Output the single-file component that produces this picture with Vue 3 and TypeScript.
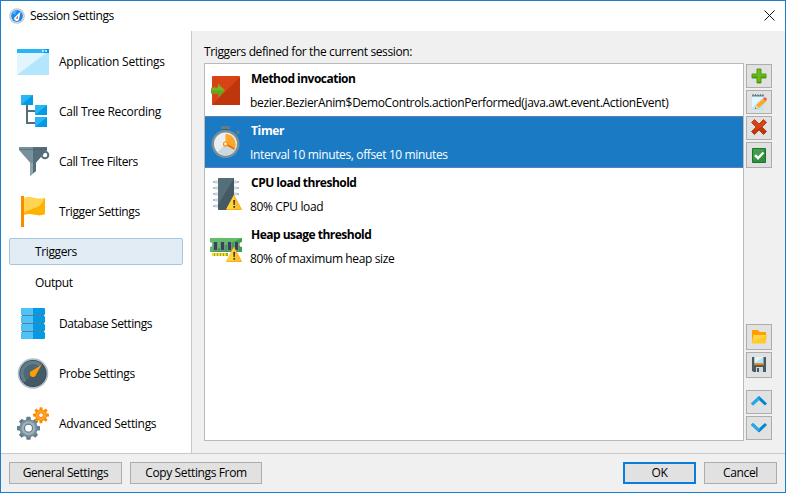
<script setup lang="ts">
import { ref } from 'vue'

interface NavItem { id: string; label: string; sub?: boolean }
interface Trigger { id: string; title: string; detail: string }

const nav: NavItem[] = [
  { id: 'app', label: 'Application Settings' },
  { id: 'tree', label: 'Call Tree Recording' },
  { id: 'filter', label: 'Call Tree Filters' },
  { id: 'flag', label: 'Trigger Settings' },
  { id: 'triggers', label: 'Triggers', sub: true },
  { id: 'output', label: 'Output', sub: true },
  { id: 'db', label: 'Database Settings' },
  { id: 'probe', label: 'Probe Settings' },
  { id: 'gears', label: 'Advanced Settings' },
]

const triggers: Trigger[] = [
  { id: 'method', title: 'Method invocation', detail: 'bezier.BezierAnim$DemoControls.actionPerformed(java.awt.event.ActionEvent)' },
  { id: 'timer', title: 'Timer', detail: 'Interval 10 minutes, offset 10 minutes' },
  { id: 'cpu', title: 'CPU load threshold', detail: '80% CPU load' },
  { id: 'heap', title: 'Heap usage threshold', detail: '80% of maximum heap size' },
]

const tools = ['add', 'edit', 'delete', 'enable', 'open', 'save', 'up', 'down']
const activeNav = ref('triggers')
const selected = ref('timer')

function gear(cx: number, cy: number, outer: number, inner: number): string {
  const pts: string[] = []
  const step = Math.PI / 4
  for (let i = 0; i < 8; i++) {
    const a = i * step
    const spread: [number, number][] = [[-0.28, inner], [-0.17, outer], [0.17, outer], [0.28, inner]]
    for (const [d, r] of spread) {
      pts.push(`${(cx + r * Math.cos(a + d)).toFixed(2)},${(cy + r * Math.sin(a + d)).toFixed(2)}`)
    }
  }
  return pts.join(' ')
}
const bigGear = gear(11.5, 20.2, 11.7, 8.9)
const smallGear = gear(24, 7.2, 8.1, 5.8)
</script>

<template>
  <div class="window">
    <header class="titlebar">
      <svg class="logo" viewBox="0 0 16 16">
        <circle cx="8" cy="8" r="7.8" fill="#bdc4cb" />
        <circle cx="8" cy="8" r="6.7" fill="#e6ebf0" />
        <circle cx="8" cy="8" r="5.9" fill="#1687ee" />
        <path d="M3.2 5.5A5.5 5.5 0 0 1 8 2.5L6 7z" fill="#4bb2ff" />
        <path d="M11.6 3.4L10 11.2A2.4 2.4 0 1 1 5.7 9.2z" fill="#fff" />
        <path d="M8.6 7.2L8.9 10.8H7z" fill="#f0442c" />
      </svg>
      <span class="caption">Session Settings</span>
      <svg class="close" viewBox="0 0 11 11"><path d="M.5.5l10 10M10.5.5l-10 10" stroke="#111" stroke-width="1" /></svg>
    </header>

    <main class="body">
      <nav class="sidebar">
        <div
          v-for="n in nav" :key="n.id"
          :class="['nav', n.sub ? 'sub' : 'top', n.id, { active: n.id === activeNav }]"
          @click="activeNav = n.id"
        >
          <svg v-if="!n.sub" class="icon" viewBox="0 0 32 32">
            <g v-if="n.id === 'app'">
              <path d="M0 7h32v22H0z" fill="#b3e5fc" /><path d="M0 7h29L0 29z" fill="#e1f5fe" />
              <path d="M0 3h32v4H0z" fill="#29b6f6" /><path d="M29 3h3v4h-6z" fill="#039be5" />
              <path d="M25 4h2v2h-2zM28 4h2v2h-2z" fill="#b3e5fc" />
            </g>
            <g v-else-if="n.id === 'tree'">
              <path d="M10 9v18h9M10 15h9" fill="none" stroke="#546e7a" stroke-width="2" />
              <path d="M4 -1h12v10H4zM18 9h12v10H18zM18 21h12v10H18z" fill="#29b6f6" />
              <path d="M16 -1v10H4zM30 9v10H18zM30 21v10H18z" fill="#039be5" />
            </g>
            <g v-else-if="n.id === 'filter'">
              <circle cx="28" cy="9" r="3.300" fill="none" stroke="#546e7a" stroke-width="2" />
              <path d="M2 1h28v3L19 16.500v8.500l-6 5V16.500L2 4z" fill="#78909c" />
              <path d="M16 1h14v3L19 16.500v8.500l-3 2.500z" fill="#546e7a" />
              <path d="M2 3.500h28" stroke="#455a64" opacity=".45" />
              <path d="M13 17h3v10.500L13 30z" fill="#90a4ae" />
            </g>
            <g v-else-if="n.id === 'flag'">
              <path d="M7 2c8-3 12 3 21 0v16c-8 4-12-2-21 1z" fill="#ffb300" />
              <path d="M7 2c8-3 12 3 20 .5C23 14 15 11 7 17z" fill="#ffd54f" />
              <path d="M4 0h3v31H4z" fill="#fb8c00" />
            </g>
            <g v-else-if="n.id === 'db'">
              <path d="M5 6h22v21H5z" fill="#607d8b" />
              <g v-for="k in 4" :key="k" :transform="`translate(0 ${(k - 1) * 8})`">
                <rect x="4" y="0" width="24" height="7" rx="1" fill="#039be5" />
                <path d="M5 0h11v7H5a1 1 0 0 1-1-1V1a1 1 0 0 1 1-1z" fill="#4fc3f7" />
              </g>
            </g>
            <g v-else-if="n.id === 'probe'">
              <circle cx="16" cy="15.500" r="15.300" fill="#b0bec5" /><circle cx="16" cy="15.500" r="13.600" fill="#37474f" />
              <circle cx="16" cy="15.500" r="12.800" fill="#455a64" />
              <path d="M7 24.500A12.700 12.700 0 0 1 25 6.500z" fill="#607d8b" />
              <circle cx="16" cy="15.500" r="9.500" fill="#455a64" opacity=".6" />
              <path d="M24.500 7L18.500 17.500 14 13.500z" fill="#ffa000" /><circle cx="16" cy="15.800" r="3.100" fill="#ffa000" />
            </g>
            <g v-else>
              <polygon :points="bigGear" fill="#607d8b" /><circle cx="11.500" cy="20.200" r="9" fill="#78909c" />
              <circle cx="11.500" cy="20.200" r="6.900" fill="#a3b2ba" />
              <circle cx="11.500" cy="20.200" r="4" fill="#fff" stroke="#607d8b" stroke-width="1.200" />
              <polygon :points="smallGear" fill="#fb8c00" /><circle cx="24" cy="7.200" r="4.700" fill="#ffa726" />
              <circle cx="24" cy="7.200" r="2.400" fill="#fff" stroke="#f57c00" />
            </g>
          </svg>
          <span>{{ n.label }}</span>
        </div>
      </nav>

      <section class="content">
        <div class="heading">Triggers defined for the current session:</div>
        <div class="panel">
          <div class="list">
            <div
              v-for="t in triggers" :key="t.id"
              :class="['row', t.id, { selected: t.id === selected }]"
              @click="selected = t.id"
            >
              <svg class="icon" viewBox="0 0 32 32">
                <g v-if="t.id === 'method'">
                  <rect x="2" y="2" width="28" height="29" rx="1" fill="#d84315" />
                  <path d="M30 3v27a1 1 0 0 1-1 1H2z" fill="#bf360c" />
                  <path d="M1 13.500h7V9.500l7 7-7 7v-4H1z" fill="#7cb324" /><path d="M1 16.500h14l-7 7v-4H1z" fill="#64a51f" />
                </g>
                <g v-else-if="t.id === 'timer'">
                  <path d="M11 0h9v3h-9zM26 6l2-2 2 2-3 3z" fill="#607d8b" /><path d="M13 3h5v3h-5z" fill="#455a64" />
                  <circle cx="15.500" cy="18" r="14" fill="#78909c" /><circle cx="15.500" cy="18" r="11.500" fill="#eceff1" />
                  <path d="M7.500 26A11.500 11.500 0 0 0 27 18H15.500z" fill="#cfd8dc" />
                  <path d="M15.500 18V8a10 10 0 0 1 9 14.500z" fill="#ffa726" />
                  <path d="M15.500 18l9 5" stroke="#ef6c00" stroke-width="1.600" />
                  <circle cx="15.500" cy="18" r="2" fill="#fff3e0" stroke="#fb8c00" stroke-width="1.200" />
                </g>
                <g v-else-if="t.id === 'cpu'">
                  <path d="M3 3h4v2H3zM3 9h4v2H3zM3 15h4v2H3zM3 21h4v2H3zM3 27h4v2H3zM25 3h4v2h-4zM25 9h4v2h-4zM25 15h4v2h-4z" fill="#b0bec5" />
                  <path d="M5 2.500h3v3H5zM5 8.500h3v3H5zM5 14.500h3v3H5zM5 20.500h3v3H5zM5 26.500h3v3H5zM24 2.500h3v3h-3zM24 8.500h3v3h-3zM24 14.500h3v3h-3z" fill="#cfd8dc" />
                  <rect x="8" y="0" width="16" height="32" rx="1" fill="#455a64" /><path d="M8 1l1-1h15L8 27z" fill="#546e7a" />
                </g>
                <g v-else>
                  <path d="M0 8h32v4a2 2 0 0 0 0 5v5H0v-5a2 2 0 0 0 0-5z" fill="#43a047" /><path d="M0 8h32L0 22v-5a2 2 0 0 0 0-5z" fill="#66bb6a" />
                  <path d="M3 12h5v9H3zM10 12h5v9h-5zM17 12h5v9h-5zM24 12h5v9h-5z" fill="#78909c" />
                  <path d="M4 12h3v8H4zM11 12h3v8h-3zM18 12h3v8h-3zM25 12h3v8h-3z" fill="#37474f" />
                  <path d="M2 23h16v3H2z" fill="#8fae2b" /><path d="M2 23h2v3H2zM5 23h2v3H5zM8 23h2v3H8zM11 23h2v3h-2zM14 23h2v3h-2z" fill="#fdd835" />
                </g>
                <g v-if="t.id === 'cpu' || t.id === 'heap'">
                  <path d="M24 17.500l7.500 14h-15z" fill="#fbc02d" stroke="#f9b017" stroke-linejoin="round" /><path d="M24 17v14h-7.500z" fill="#fdd835" />
                  <path d="M23.200 22h1.900l-.3 5h-1.300zM23.300 28h1.700v1.800h-1.700z" fill="#423b32" />
                </g>
              </svg>
              <div class="texts">
                <div class="title">{{ t.title }}</div>
                <div class="detail">{{ t.detail }}</div>
              </div>
            </div>
          </div>

          <div class="tools">
            <button v-for="b in tools" :key="b" :class="['tool', b]" type="button">
              <svg viewBox="0 0 16 16">
                <g v-if="b === 'add'">
                  <path d="M6 1h4v5h5v4h-5v5H6v-5H1V6h5z" fill="#6cba15" stroke="#4d9a12" /><path d="M1.500 9H6.500M6.500 14.200h3M9.500 9h5" stroke="#458c12" />
                </g>
                <g v-else-if="b === 'edit'">
                  <path d="M1 1h12v15H1z" fill="#bce7fb" /><path d="M1 3h11L1 14z" fill="#e5f6ff" />
                  <path d="M1 1h12v1.500H1z" fill="#78909c" /><path d="M2 0v2M4.500 0v2M7 0v2M9.500 0v2M12 0v2" stroke="#607d8b" />
                  <path d="M4 15l1.200-4L13 4l2.700 2.700-7.600 7.200z" fill="#ffa726" /><path d="M12.500 4.500L14 3l2 2-1.500 2z" fill="#ef5340" />
                  <path d="M5.200 11l2.800 2.800L4 15z" fill="#f6d0a2" /><path d="M4 15l.4-1.400 1 .9z" fill="#37474f" />
                </g>
                <g v-else-if="b === 'delete'">
                  <path d="M3.500.5L8 5l4.500-4.500 3 3L11 8l4.500 4.500-3 3L8 11l-4.500 4.500-3-3L5 8 .5 3.500z" fill="#d84315" stroke="#ad300b" stroke-width=".8" />
                  <path d="M11 8l4.500 4.500-3 3L8 11l-4.500 4.500-3-3z" fill="#bf360c" />
                </g>
                <g v-else-if="b === 'enable'">
                  <path d="M1.500 1.500h13v14h-13z" fill="#2f8f3e" stroke="#1b742c" /><path d="M2 2h12L2 14z" fill="#419e4a" />
                  <path d="M4 8.200l3 3 5.500-5.700" fill="none" stroke="#fff" stroke-width="2.400" />
                </g>
                <g v-else-if="b === 'open'">
                  <path d="M1 1h6l1.500 2H15v10H1z" fill="#ffa000" /><path d="M2.500 6H16l-1.500 8.500H.5z" fill="#ffca28" /><path d="M2.500 6H16L2 13z" fill="#ffd54f" />
                </g>
                <g v-else-if="b === 'save'">
                  <path d="M1 0h14v15H2.500L1 13.500z" fill="#455a64" /><path d="M3.500 0h9v7h-9z" fill="#b3e5fc" /><path d="M3.500 0h9l-9 6z" fill="#e1f5fe" />
                  <path d="M3 6.200h10v2H3z" fill="#f57c00" /><path d="M5 10h7v5H5z" fill="#cfd8dc" /><path d="M6 11h2v4H6z" fill="#455a64" />
                </g>
                <g v-else-if="b === 'up'">
                  <path d="M1 10.500L8 4l7 6.500" fill="none" stroke="#0288d1" stroke-width="3" /><path d="M1 10.500L8 4" stroke="#29a9e8" stroke-width="3" />
                </g>
                <g v-else>
                  <path d="M1 4l7 6.500L15 4" fill="none" stroke="#0288d1" stroke-width="3" /><path d="M1 4l7 6.500" stroke="#29a9e8" stroke-width="3" />
                </g>
              </svg>
            </button>
          </div>
        </div>
      </section>
    </main>

    <footer class="footer">
      <button class="btn general" type="button">General Settings</button>
      <button class="btn copy" type="button">Copy Settings From</button>
      <button class="btn ok" type="button">OK</button>
      <button class="btn cancel" type="button">Cancel</button>
    </footer>
  </div>
</template>

<style>
body { margin: 0; overflow: hidden; }
</style>

<style scoped>
.window {
  box-sizing: border-box; width: 786px; height: 493px; border: 1px solid #1b7fd0;
  display: flex; flex-direction: column; background: #f0f0f0; color: #000;
  font: 12px/16px "Open Sans", "Noto Sans", sans-serif; letter-spacing: -0.38px; white-space: nowrap;
}
svg { display: block; flex: none; overflow: visible; }
.titlebar { height: 30px; background: #fff; display: flex; align-items: center; padding: 0 10px 0 8px; }
.logo { width: 16px; height: 16px; margin-right: 5px; }
.caption { flex: 1; }
.close { width: 11px; height: 11px; margin-top: -2px; }
.body { height: 422px; display: flex; }
.sidebar { box-sizing: border-box; width: 191px; padding: 6px 8px 0; background: #fff; border-right: 1px solid #c8c8c8; }
.nav { display: flex; align-items: center; box-sizing: border-box; }
.top { height: 50px; padding-left: 8px; gap: 10px; }
.app { letter-spacing: -0.22px; }
.tree, .gears { letter-spacing: -0.3px; }
.db { letter-spacing: -0.43px; }
.sub { width: 174px; height: 27px; padding-left: 25px; border: 1px solid transparent; border-radius: 2px; }
.triggers { margin-top: 1px; }
.output { margin: 4px 0 3px; }
.sub.active { background: #e2ecf5; border-color: #a4c8e1; }
.icon { width: 32px; height: 32px; }
.content { flex: 1; padding: 13px 13px 0 12px; }
.heading { height: 19px; }
.panel { display: flex; gap: 2px; }
.list { box-sizing: border-box; width: 540px; height: 378px; background: #fff; border: 1px solid #b9b9b9; }
.row { box-sizing: border-box; height: 52px; display: flex; align-items: center; padding-left: 5px; gap: 8px; border: 0 solid #5b81bb; }
.row.selected { background: #1a7ac3; border-width: 1px 0; color: #fff; }
.texts { padding-top: 2px; }
.title { font-weight: 700; letter-spacing: -0.51px; margin-bottom: 8px; padding-left: 1px; }
.timer .title { letter-spacing: -0.35px; }
.detail { letter-spacing: -0.37px; }
.method .detail { letter-spacing: -0.34px; }
.tools { width: 26px; padding-top: 1px; display: flex; flex-direction: column; gap: 2px; }
.tool { box-sizing: border-box; width: 26px; height: 24px; padding: 0; border: 1px solid #adadad; background: #e1e1e1; display: flex; align-items: center; justify-content: center; }
.tool svg { width: 16px; height: 16px; }
.delete svg { margin-top: -2px; }
.enable, .open, .save { height: 26px; }
.open { margin-top: 154px; }
.up { margin-top: 10px; }
.footer { flex: 1; border-top: 1px solid #c8c8c8; display: flex; align-items: flex-start; padding: 8px 8px 0; gap: 8px; }
.btn { box-sizing: border-box; height: 22px; padding: 0; border: 1px solid #adadad; background: #e1e1e1; font: inherit; letter-spacing: inherit; color: #000; }
.general { width: 113px; }
.copy { width: 132px; }
.ok { width: 73px; margin-left: auto; border: 2px solid #0a7ddb; }
.cancel { width: 73px; }
</style>
